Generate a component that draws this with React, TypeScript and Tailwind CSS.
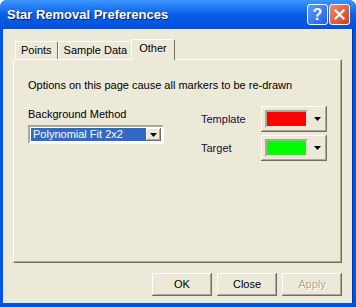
import { ReactNode } from "react";

const raised =
  "shadow-[inset_-1px_-1px_0_#716f64,inset_1px_1px_0_#ffffff,inset_-2px_-2px_0_#aca899]";

function ClassicButton({ children, disabled }: { children: ReactNode; disabled?: boolean }) {
  return (
    <button
      className={`h-[23px] w-[60px] bg-[#ece9d8] text-[11px] ${raised} ${
        disabled ? "text-[#aca899] [text-shadow:1px_1px_0_#fff]" : "text-black"
      }`}
    >
      {children}
    </button>
  );
}

function ArrowGlyph() {
  return (
    <svg width="7" height="4" viewBox="0 0 7 4" aria-hidden="true">
      <path d="M0 0h7L3.5 4z" fill="#000" />
    </svg>
  );
}

function ColorPicker({ color }: { color: string }) {
  return (
    <div className={`flex h-[26px] w-[66px] items-center bg-[#ece9d8] pl-1 ${raised}`}>
      <div className="h-[18px] w-[43px] border-2 border-t-[#aca899] border-l-[#aca899] border-r-[#ece9d8] border-b-[#ece9d8]">
        <div className="h-full w-full" style={{ background: color }} />
      </div>
      <div className="flex flex-1 justify-center">
        <ArrowGlyph />
      </div>
    </div>
  );
}

function Tab({ label, active }: { label: string; active?: boolean }) {
  return (
    <div
      className={`relative flex items-center rounded-t-[2px] border-l border-t border-r border-l-white border-t-white border-r-[#716f64] bg-[#ece9d8] ${
        active ? "z-10 -mx-[2px] mb-[-1px] h-[21px] px-[7px] pb-[3px]" : "h-[18px] px-[5px]"
      }`}
    >
      {label}
    </div>
  );
}

export default function App() {
  return (
    <div
      className="flex h-[307px] w-[356px] flex-col overflow-hidden rounded-t-[7px] bg-[#0054e3] text-[11px] text-black"
      style={{ fontFamily: "Tahoma, 'Liberation Sans', Arial, sans-serif" }}
    >
      {/* title bar */}
      <div className="flex h-[29px] shrink-0 items-center justify-between bg-gradient-to-b from-[#3d95ff] via-[#0a5fe8] to-[#0050de] pl-[7px] pr-[6px]">
        <span className="text-[13px] font-bold text-white [text-shadow:1px_1px_0_#0a1e6a]">
          Star Removal Preferences
        </span>
        <div className="flex gap-[1px]">
          <div className="flex h-[21px] w-[21px] items-center justify-center rounded-[3px] border border-white bg-gradient-to-br from-[#5c9bff] to-[#1e5ee8] text-[16px] font-bold leading-none text-white">
            ?
          </div>
          <div className="flex h-[21px] w-[21px] items-center justify-center rounded-[3px] border border-white bg-gradient-to-br from-[#e88a6a] to-[#c9421e]">
            <svg width="11" height="11" viewBox="0 0 11 11" aria-hidden="true">
              <path d="M1.5 1.5l8 8M9.5 1.5l-8 8" stroke="#fff" strokeWidth="2.2" strokeLinecap="square" />
            </svg>
          </div>
        </div>
      </div>

      {/* client area */}
      <div className="mx-[3px] mb-[4px] flex flex-1 flex-col bg-[#ece9d8] px-[10px] pt-[10px] border-r border-r-[#0030b8]">
        <div className="flex items-end pl-[2px]">
          <Tab label="Points" />
          <Tab label="Sample Data" />
          <Tab label="Other" active />
        </div>
        <div className="flex h-[204px] flex-col border border-l-white border-t-white border-r-[#716f64] border-b-[#716f64] px-[14px] pt-[19px] shadow-[inset_-1px_-1px_0_#aca899]">
          <p className="leading-[13px]">Options on this page cause all markers to be re-drawn</p>
          <div className="mt-[16px] flex">
            <div className="flex w-[175px] flex-col">
              <span className="leading-[13px]">Background Method</span>
              <div className="mt-[4px] flex h-[19px] w-[136px] items-center border-2 border-t-[#aca899] border-l-[#aca899] border-r-white border-b-white bg-white p-[1px]">
                <div className="flex h-full flex-1 items-center bg-[#316ac5] pl-[2px] text-white">
                  Polynomial Fit 2x2
                </div>
                <div className={`flex h-full w-[15px] items-center justify-center bg-[#ece9d8] ${raised}`}>
                  <ArrowGlyph />
                </div>
              </div>
            </div>
            <div className="-mt-[2px] grid grid-cols-[60px_auto] items-center gap-y-[3px]">
              <span className="text-[#1a0a3a]">Template</span>
              <ColorPicker color="#ff0000" />
              <span className="text-[#1a0a3a]">Target</span>
              <ColorPicker color="#00ff00" />
            </div>
          </div>
        </div>
        <div className="mt-[10px] flex justify-end gap-[5px] pr-0">
          <ClassicButton>OK</ClassicButton>
          <ClassicButton>Close</ClassicButton>
          <ClassicButton disabled>Apply</ClassicButton>
        </div>
      </div>
    </div>
  );
}
